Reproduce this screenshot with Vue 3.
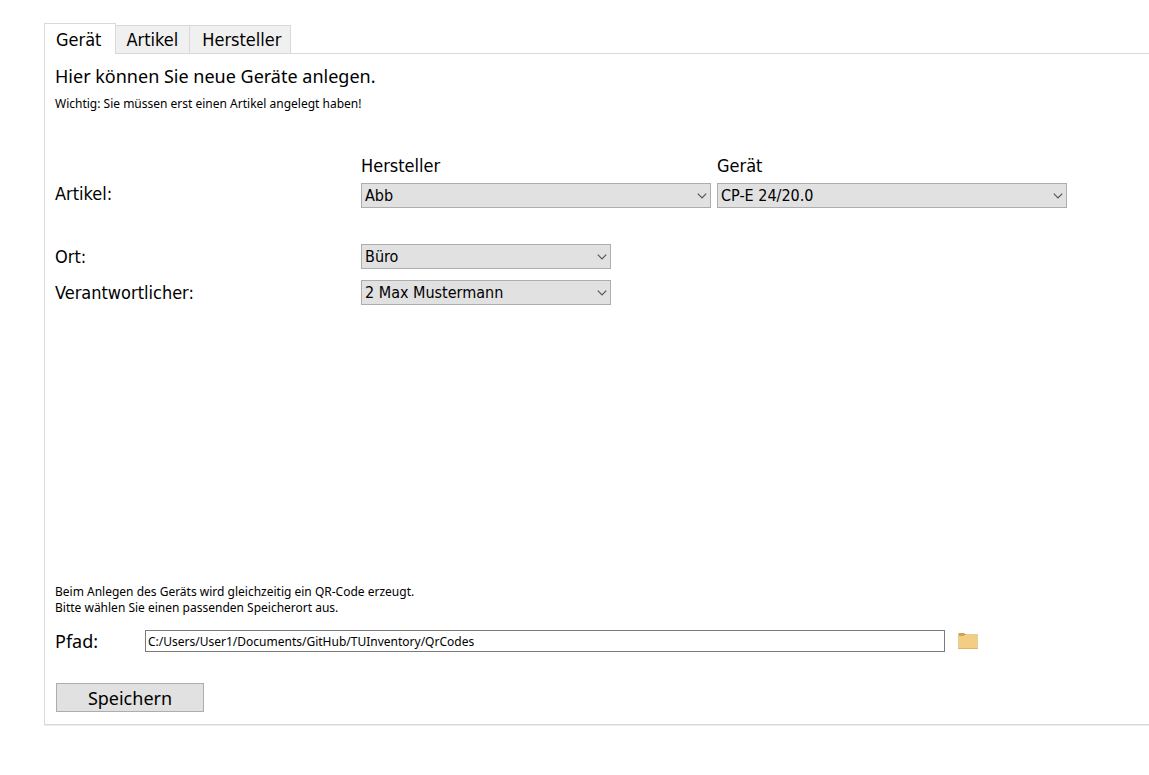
<script setup>
import { ref } from 'vue'

const tabs = ['Gerät', 'Artikel', 'Hersteller']
const activeTab = ref('Gerät')
const manufacturer = ref('Abb')
const device = ref('CP-E 24/20.0')
const place = ref('Büro')
const person = ref('2 Max Mustermann')
const path = ref('C:/Users/User1/Documents/GitHub/TUInventory/QrCodes')
</script>

<template>
  <main class="window">
    <div class="tabs" role="tablist">
      <button
        v-for="tab in tabs"
        :key="tab"
        type="button"
        role="tab"
        class="tab"
        :class="{ active: tab === activeTab }"
        :aria-selected="tab === activeTab"
        @click="activeTab = tab"
      >{{ tab }}</button>
    </div>

    <form class="panel" @submit.prevent>
      <h1 class="title">Hier können Sie neue Geräte anlegen.</h1>
      <p class="hint">Wichtig: Sie müssen erst einen Artikel angelegt haben!</p>

      <div class="row article">
        <span class="label">Artikel:</span>
        <div class="field wide">
          <label for="manufacturer" class="caption">Hersteller</label>
          <div class="combo">
            <select id="manufacturer" v-model="manufacturer"><option>Abb</option></select>
            <svg class="chevron" viewBox="0 0 10 6" aria-hidden="true"><path d="M.8.7 5 4.9 9.2.7" /></svg>
          </div>
        </div>
        <div class="field wide">
          <label for="device" class="caption">Gerät</label>
          <div class="combo">
            <select id="device" v-model="device"><option>CP-E 24/20.0</option></select>
            <svg class="chevron" viewBox="0 0 10 6" aria-hidden="true"><path d="M.8.7 5 4.9 9.2.7" /></svg>
          </div>
        </div>
      </div>

      <div class="row place">
        <label for="place" class="label">Ort:</label>
        <div class="combo field">
          <select id="place" v-model="place"><option>Büro</option></select>
          <svg class="chevron" viewBox="0 0 10 6" aria-hidden="true"><path d="M.8.7 5 4.9 9.2.7" /></svg>
        </div>
      </div>
      <div class="row person">
        <label for="person" class="label">Verantwortlicher:</label>
        <div class="combo field">
          <select id="person" v-model="person"><option>2 Max Mustermann</option></select>
          <svg class="chevron" viewBox="0 0 10 6" aria-hidden="true"><path d="M.8.7 5 4.9 9.2.7" /></svg>
        </div>
      </div>

      <p class="hint note">Beim Anlegen des Geräts wird gleichzeitig ein QR-Code erzeugt.<br />Bitte wählen Sie einen passenden Speicherort aus.</p>

      <div class="path-row">
        <label for="path" class="path-label">Pfad:</label>
        <input id="path" v-model="path" type="text" class="path" />
        <button type="button" class="browse" aria-label="Ordner wählen">
          <svg viewBox="0 0 20 16" aria-hidden="true">
            <path d="M0 0H7V1H20V16H0Z" fill="#e2cf9f" />
            <path d="M1 2H19V15H1Z" fill="#f3cd83" />
            <path d="M1 0H6V1H8V2H6V3H1Z" fill="#d0a255" />
            <path d="M0 15H20V16H0Z" fill="#dfb66c" />
          </svg>
        </button>
      </div>

      <button type="submit" class="save">Speichern</button>
    </form>
  </main>
</template>

<style>
body {
  margin: 0;
  background: #fff;
}
</style>

<style scoped>
.window {
  padding: 23px 0 50px 44px;
  color: #000;
  font-family: Tahoma, "Noto Sans", "DejaVu Sans", sans-serif;
  font-size: 18px;
  line-height: 22px;
}

.window * {
  box-sizing: border-box;
}

button,
input,
select {
  margin: 0;
  border-radius: 0;
  color: inherit;
  font: inherit;
}

.tabs,
.row {
  font-family: Tahoma, "DejaVu Sans Condensed", "DejaVu Sans", sans-serif;
}

.tabs {
  display: flex;
  align-items: flex-end;
}

.tab {
  height: 28px;
  margin-bottom: 1px;
  padding: 0 9px 0 12px;
  border: 1px solid #d9d9d9;
  border-left: 0;
  border-bottom: 0;
  background: #f0f0f0;
  white-space: nowrap;
}

.tab:nth-child(2) {
  padding: 0 11px 0 10px;
}

.tab.active {
  position: relative;
  height: 31px;
  margin-bottom: 0;
  padding: 2px 14px 0 11px;
  border-left: 1px solid #d9d9d9;
  background: #fff;
}

.panel {
  margin-top: -1px;
  padding: 11px 10px 12px 10px;
  border: 1px solid #d9d9d9;
  border-right: 0;
  box-shadow: 0 1px 0 #ececec;
}

.title {
  margin: 0;
  font-size: 18px;
  font-weight: 400;
}

.hint {
  margin: 9px 0 0;
  font-size: 12px;
  line-height: 16px;
}

.row {
  display: flex;
  align-items: flex-end;
  gap: 6px;
}

.label {
  flex: 0 0 300px;
  line-height: 24px;
}

.article {
  margin-top: 43px;
}

.article .label {
  padding-bottom: 2px;
}

.place {
  margin-top: 36px;
}

.person {
  margin-top: 11px;
}

.field {
  flex: 0 1 250px;
  min-width: 0;
}

.field.wide {
  flex-basis: 350px;
}

.caption {
  display: block;
  margin-bottom: 6px;
}

.combo {
  position: relative;
}

select {
  display: block;
  width: 100%;
  height: 25px;
  padding: 0 24px 0 3px;
  border: 1px solid #adadad;
  background: #e1e1e1;
  font-size: 16px;
  line-height: 22px;
  appearance: none;
}

.chevron {
  position: absolute;
  top: 10px;
  right: 4px;
  width: 10px;
  height: 6px;
  fill: none;
  stroke: #555;
  stroke-width: 1.2;
  pointer-events: none;
}

.note {
  margin-top: 279px;
}

.path-row {
  display: flex;
  align-items: center;
  margin-top: 14px;
}

.path-label {
  flex: 0 0 90px;
}

.path {
  flex: 0 1 800px;
  min-width: 0;
  height: 22px;
  padding: 1px 2px 0;
  border: 1px solid #7a7a7a;
  background: #fff;
  font-size: 12px;
}

.browse {
  display: block;
  margin-left: 13px;
  padding: 0;
  border: 0;
  background: none;
}

.browse svg {
  display: block;
  width: 20px;
  height: 16px;
}

.save {
  display: block;
  width: 148px;
  height: 29px;
  margin: 31px 0 0 1px;
  padding: 0;
  border: 1px solid #adadad;
  background: #e1e1e1;
}
</style>
